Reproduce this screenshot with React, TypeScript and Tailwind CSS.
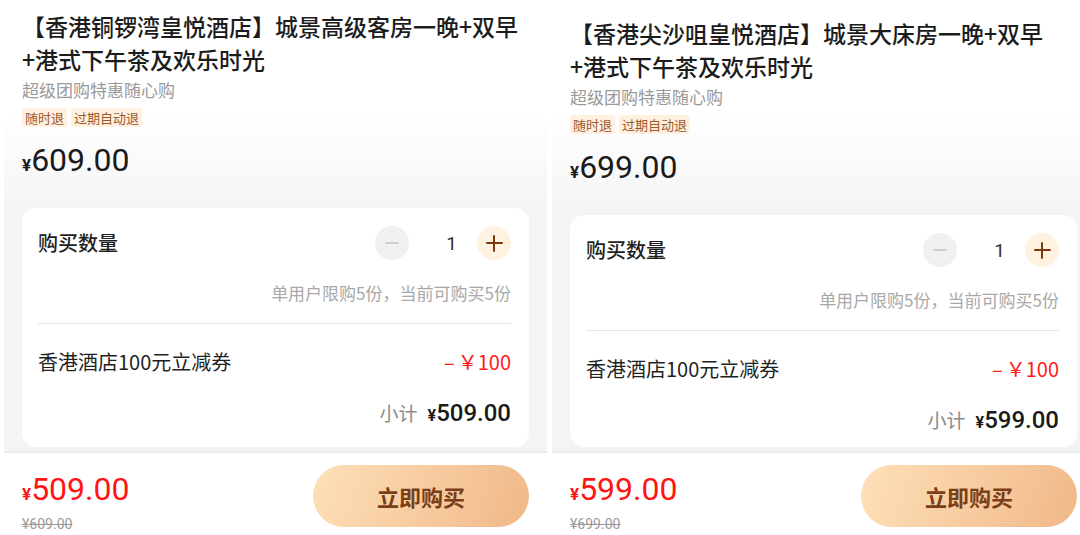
const PANELS = [
  {
    title: '【香港铜锣湾皇悦酒店】城景高级客房一晚+双早+港式下午茶及欢乐时光',
    price: '609.00',
    total: '509.00',
    shifted: false,
  },
  {
    title: '【香港尖沙咀皇悦酒店】城景大床房一晚+双早+港式下午茶及欢乐时光',
    price: '699.00',
    total: '599.00',
    shifted: true,
  },
] as const;

const CJK = "font-['Noto_Sans_CJK_SC',sans-serif]";
const NUM = "font-['Roboto','Noto_Sans_CJK_SC',sans-serif]";

function Stepper() {
  return (
    <div className="flex items-center">
      <div className="flex h-[34px] w-[34px] items-center justify-center rounded-full bg-[#f0f0f0]">
        <span className="h-[2px] w-[14px] rounded bg-[#cdcdcd]" />
      </div>
      <span className={`${NUM} ml-[37px] mr-[20px] text-[19px] leading-none text-[#333]`}>1</span>
      <div className="relative flex h-[34px] w-[34px] items-center justify-center rounded-full bg-[#fff2e0]">
        <span className="absolute h-[2.5px] w-[17px] rounded bg-[#7a3a0a]" />
        <span className="absolute h-[17px] w-[2.5px] rounded bg-[#7a3a0a]" />
      </div>
    </div>
  );
}

function Panel({ title, price, total, shifted }: (typeof PANELS)[number]) {
  return (
    <div className={`${CJK} flex h-full w-[543px] shrink-0 flex-col`}>
      {/* scroll area */}
      <div
        className={`flex min-h-0 flex-1 flex-col overflow-hidden bg-[linear-gradient(180deg,#ffffff_0px,#ffffff_115px,#f4f4f4_215px)] px-[18px] ${
          shifted ? 'pt-[17px]' : 'pt-[10px]'
        }`}
      >
        <h1 className="text-[23px] font-medium leading-[33px] text-[#1c1c1c]">{title}</h1>
        <p className="mt-[2px] text-[17px] leading-[24px] text-[#9a9a9a]">超级团购特惠随心购</p>
        <div className="mt-[6px] flex gap-[4px]">
          <span className="rounded-[3px] bg-[#fff0e0] px-[3px] text-[13px] leading-[19px] text-[#9c5a2c]">随时退</span>
          <span className="rounded-[3px] bg-[#fff0e0] px-[3px] text-[13px] leading-[19px] text-[#9c5a2c]">过期自动退</span>
        </div>
        <div className={`${NUM} mt-[13px] flex items-baseline leading-[40px] text-[#1a1a1a]`}>
          <span className="text-[17px] font-bold">¥</span>
          <span className="text-[32px]">{price}</span>
        </div>

        <div className="mb-[4px] mt-[23px] flex-1 rounded-[14px] bg-white pl-[16px] pr-[18px] pt-[17px]">
          <div className="flex h-[36px] items-center justify-between">
            <span className="text-[20px] font-medium text-[#1f1f1f]">购买数量</span>
            <Stepper />
          </div>
          <p className="mt-[21px] text-right text-[17px] leading-[22px] text-[#a8a8a8]">
            单用户限购5份，当前可购买5份
          </p>
          <div className="mt-[19px] h-px bg-[#e6e6e6]" />
          <div className="mt-[24px] flex items-center justify-between leading-[28px]">
            <span className="text-[20px] text-[#1f1f1f]">香港酒店100元立减券</span>
            <span className="text-[20px] text-[#ff1a1a]">
              –<span className="ml-[3px]">￥100</span>
            </span>
          </div>
          <div className="mt-[22px] flex items-baseline justify-end leading-[30px]">
            <span className="text-[19px] text-[#8a8a8a]">小计</span>
            <span className={`${NUM} ml-[10px] text-[16px] font-bold text-[#1a1a1a]`}>¥</span>
            <span className={`${NUM} text-[24px] font-medium text-[#1a1a1a]`}>{total}</span>
          </div>
        </div>
      </div>

      {/* bottom bar */}
      <div className="flex h-[84px] shrink-0 justify-between border-t-2 border-[#e8eceb] bg-white pl-[18px] pr-[18px]">
        <div className="pt-[17px]">
          <div className={`${NUM} flex items-baseline leading-[38px] text-[#ff1414]`}>
            <span className="text-[17px] font-bold">¥</span>
            <span className="text-[32px]">{total}</span>
          </div>
          <div className={`${NUM} mt-[3px] text-[14px] leading-[16px] text-[#9a9a9a] line-through`}>¥{price}</div>
        </div>
        <button
          type="button"
          className="mt-[12px] h-[62px] w-[216px] rounded-full bg-[linear-gradient(110deg,#fee0b8,#f0b888)] text-[22px] font-bold text-[#7a3e18]"
        >
          立即购买
        </button>
      </div>
    </div>
  );
}

export default function App() {
  return (
    <div className="flex h-[535px] w-[1080px] gap-[5px] overflow-hidden bg-white pl-[4px]">
      {PANELS.map((p) => (
        <Panel key={p.price} {...p} />
      ))}
    </div>
  );
}
